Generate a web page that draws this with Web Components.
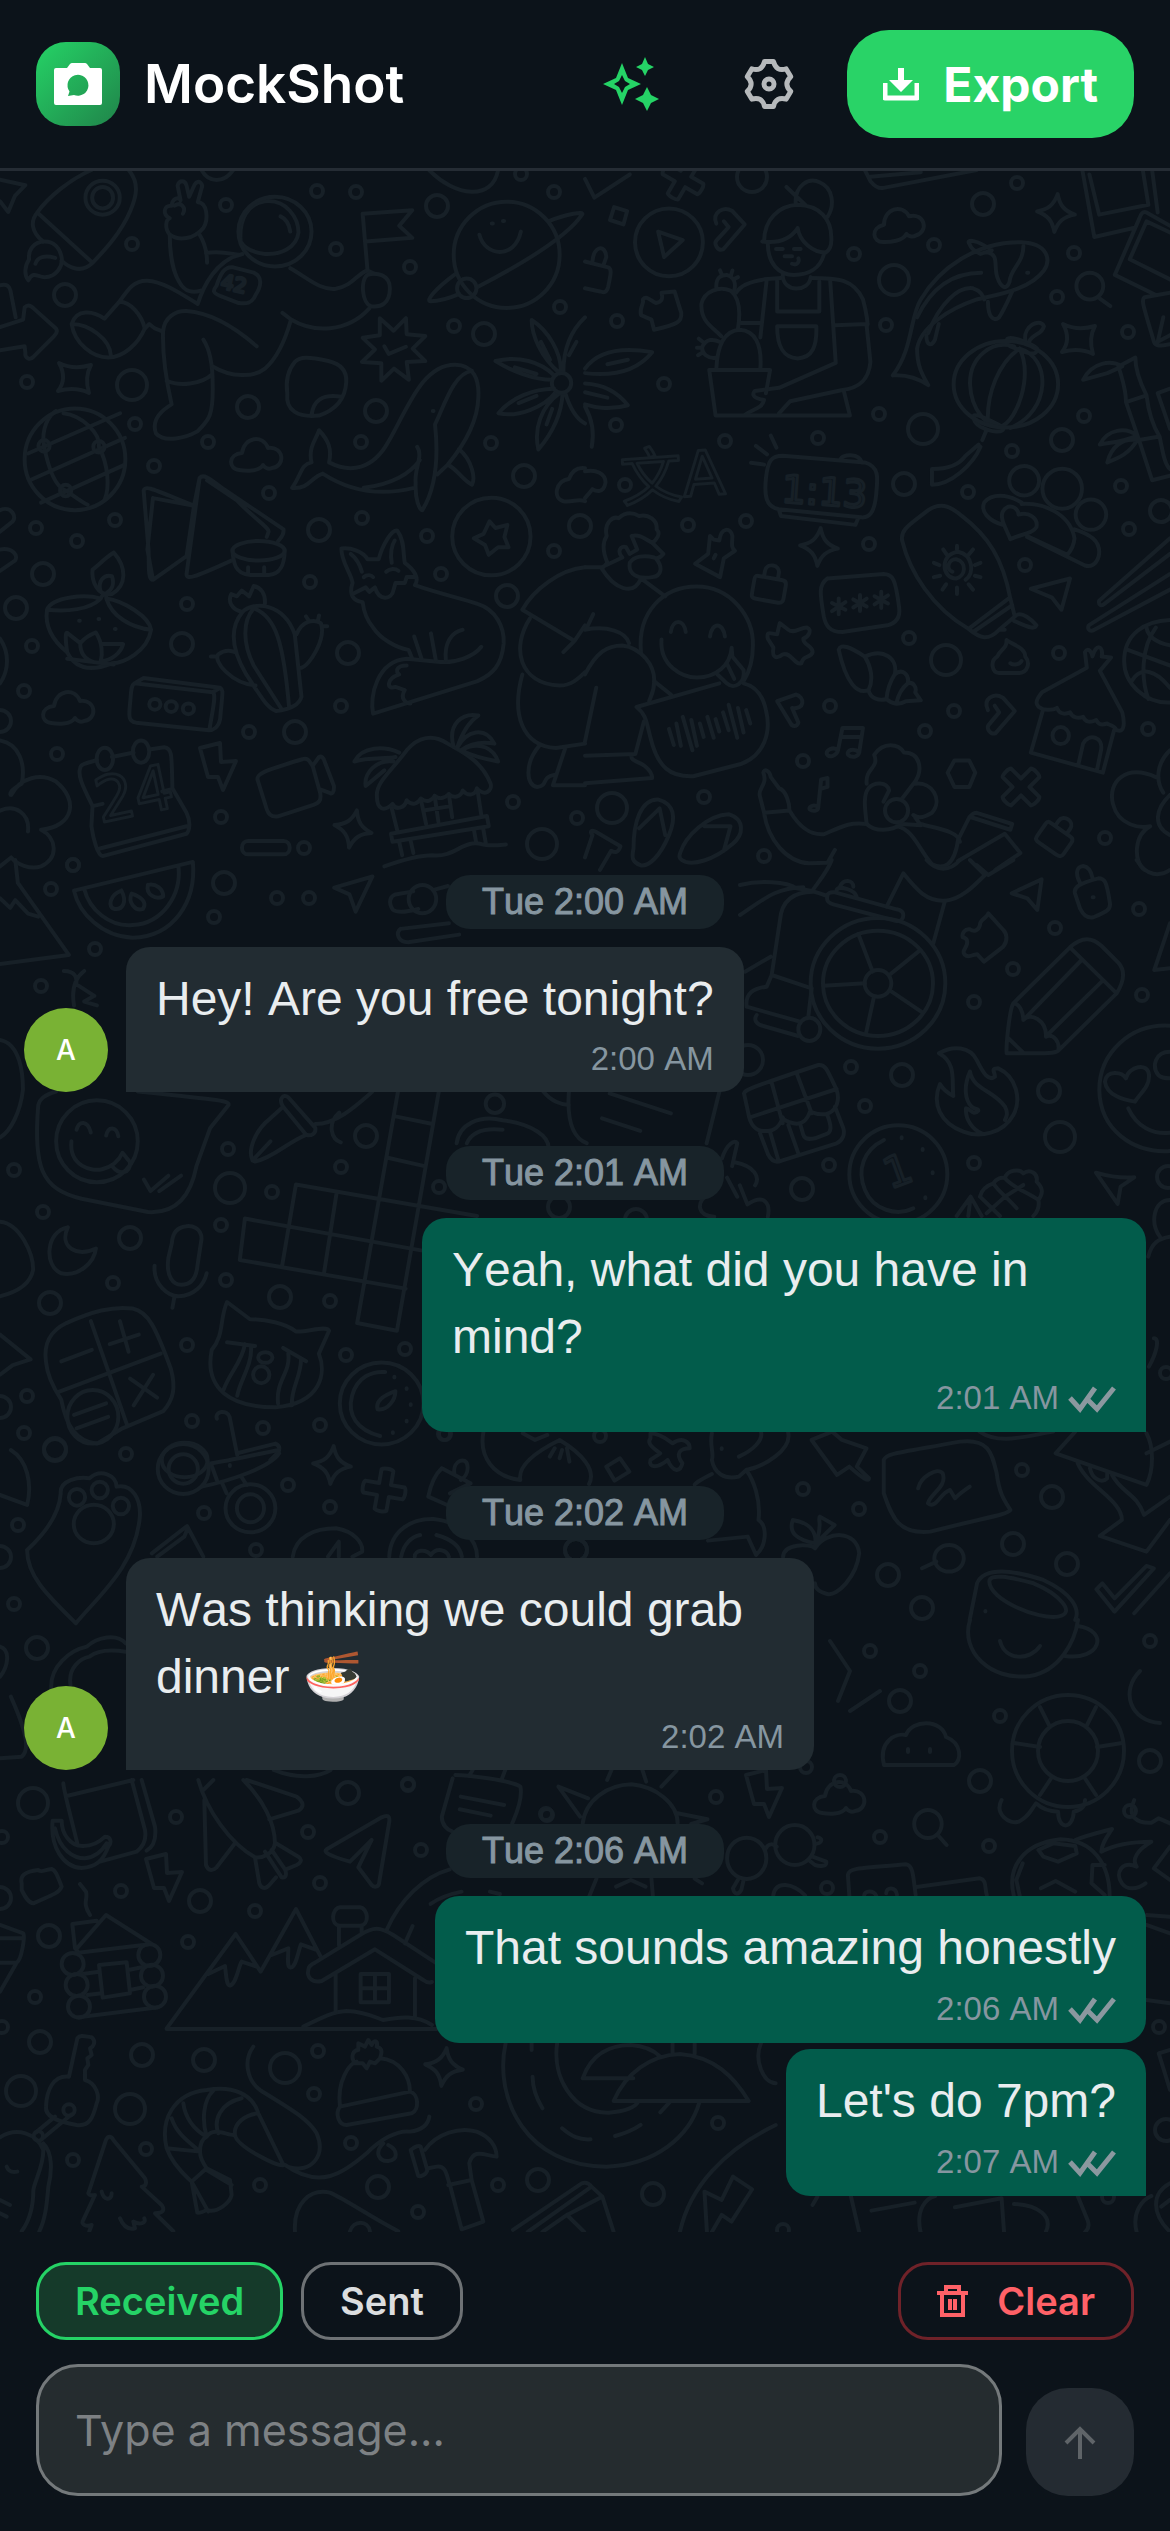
<!DOCTYPE html>
<html lang="en">
<head>
<meta charset="utf-8">
<meta name="viewport" content="width=device-width, initial-scale=1">
<title>MockShot</title>
<style>
  body {
    margin: 0;
    background-color: #0c131a;
    font-family: Inter, "Open Sans", sans-serif;
  }
</style>
</head>
<body>
<mock-app></mock-app>

<script>
// small shapes repeated over the wallpaper, drawn around 0,0
const STAMPS = {
  sparkle: "M0-19C3-8 8-3 19 0C8 3 3 8 0 19C-3 8-8 3-19 0C-8-3-3-8 0-19Z",
  pinch: "M-16-15C-6-10 6-10 16-13C11-4 11 5 14 15C4 10-6 10-17 13C-10 4-11-6-16-15Z",
  bolt: "M-18-20L2-25L3-6L18-7L5 22L0 9L-10 9Z",
  cloud: "M-16 16C-27 15-27 0-13-1C-11-17 8-20 13-6C29-8 31 12 17 14C13 16 9 13 8 11C4 18-10 17-16 16Z",
  cross: "M-6-20C-4-22 4-22 6-20V-6H20C22-4 22 4 20 6H6V20C4 22-4 22-6 20V6H-20C-22 4-22-4-20-6H-6Z",
  lock: "M-11-5H12C16-5 16-2 16 0V13C16 17 14 18 10 18H-11C-16 18-16 16-16 12V-1C-16-5-15-5-11-5ZM-7-5V-11C-7-20 7-20 7-11V-5"
};

// the wallpaper is built from tiles: origin, scale, then its drawings
const TILES = [
  {
    at: [0, -1], scale: [0.3731, 0.4464],
    paths: [
      "M0 22L68 34L40 58L22 94L0 70",
      "M100 95C130 60 190 20 245 0M345 0C375 30 365 60 350 90C325 140 280 180 248 208C215 235 180 215 165 203M100 95L248 208M100 95C80 115 85 140 115 160",
      "M120 160C90 160 75 180 78 200C66 215 64 235 76 247C90 225 100 240 120 240C150 240 170 215 165 195M120 160C145 160 160 175 165 195M95 210C100 195 120 190 148 197",
      "M455 108C435 100 438 78 460 80C462 62 480 60 484 68L476 35C480 22 496 22 500 35L507 60L522 32C532 20 546 30 540 42L530 72C555 72 560 110 545 130C520 155 480 160 455 145C440 130 445 110 455 108M468 80C485 70 500 85 490 98",
      "M455 145C455 190 465 230 480 250C495 275 520 275 538 270M535 145C550 165 555 185 555 208M552 186C590 180 620 188 640 190",
      "M645 160C640 110 665 75 710 70C770 65 800 110 800 140C795 175 750 190 710 188C680 185 655 175 645 160M752 104C768 110 775 122 778 138",
      "M580 260C590 235 600 215 625 218L680 230C705 240 700 260 685 280C675 300 660 300 640 298L590 282C570 275 570 270 580 260",
      "M320 295C345 265 360 247 395 248C440 250 490 280 530 300C545 260 580 200 650 188M320 295L280 333C250 315 205 310 192 345C200 390 250 420 290 420C330 420 370 390 388 355C380 325 350 295 320 295M192 345C240 345 295 380 297 415",
      "M388 355L400 345L415 355L437 362C440 330 470 315 500 316C570 320 640 360 688 395M437 362C435 420 445 470 460 525C430 540 405 560 418 590C440 612 500 600 530 585C560 560 572 550 570 480C570 440 565 405 545 380M447 472C480 485 540 480 568 458",
      "M570 440C620 465 680 465 710 445C745 420 765 380 780 335L757 320M780 335C840 365 930 365 990 310M778 220C830 245 860 270 900 266C945 260 960 230 985 225L1005 233",
      "M985 225L972 98L1105 90L1070 125L1105 152L980 160M985 235C1010 228 1045 235 1045 265C1045 300 1020 308 995 305C970 300 965 245 985 235",
      "M1470 115C1520 98 1568 92 1560 100C1520 150 1400 210 1280 262M1222 232C1160 270 1140 295 1155 294C1180 294 1210 285 1230 278M1285 145C1300 195 1380 200 1396 138M1318 120h3M1348 114h3",
      "M1055 360L1088 332L1090 368L1140 372L1106 400L1140 428L1090 430L1096 470L1056 445L1022 472L1022 433L970 430L1005 402L972 376L1018 370L1018 332ZM1030 395L1042 412L1088 396",
      "M1500 455C1450 420 1425 370 1425 336C1470 360 1505 410 1503 452M1450 385L1474 425M1510 452C1510 400 1530 360 1568 330M1525 415L1545 385M1480 470C1430 470 1370 450 1328 428C1390 415 1450 430 1485 460M1380 442L1438 457M1485 490C1430 490 1370 510 1336 545C1390 555 1460 530 1490 497M1390 522L1438 506M1500 500C1450 530 1430 580 1443 626C1480 590 1505 550 1508 500M1465 570L1480 535M1515 500C1530 540 1550 560 1568 568",
      "M0 352L62 335L66 308C75 300 85 305 90 310L150 355C156 362 150 368 145 372L90 418C80 428 66 420 68 410L66 395L0 404M0 258C20 255 25 260 28 270L42 330",
      "M770 500C765 470 775 445 790 430C805 418 825 418 880 428C915 435 930 450 928 475C925 520 890 540 855 550C800 555 765 540 770 500M835 548C840 520 860 500 915 508",
      "M783 712C810 680 805 660 835 655C825 620 850 600 855 583C880 605 890 625 882 655C940 680 1000 670 1040 610C1090 540 1130 435 1220 436C1270 436 1285 470 1282 510C1280 570 1240 620 1200 660L1172 682M783 712C830 715 830 690 865 680C920 710 1000 735 1110 712M975 712C1050 705 1100 680 1125 650M1118 620C1135 640 1110 670 1114 700C1112 740 1125 762 1132 762C1170 710 1175 640 1166 570C1190 530 1215 455 1265 450M1230 625C1265 650 1275 690 1265 705C1240 695 1225 670 1200 660M1160 540h2",
      "M118 618C110 580 130 550 150 540M75 635L322 545M118 618C130 670 150 710 176 718C195 728 215 742 235 750M80 695L335 600M110 745L335 660M170 545C220 550 270 590 265 620C290 660 295 710 280 740",
      "M385 718C390 705 410 715 520 752L500 865L410 918C395 918 400 880 398 850ZM410 735L520 752M410 735L395 850L410 918M520 752L535 690C545 680 560 690 600 715L760 805C762 820 750 825 745 832M535 690L500 905C500 918 515 915 620 875M555 695L635 740C680 780 720 800 720 810L715 822",
      "M623 850C625 880 630 905 670 907L720 907C755 905 763 880 763 850M665 890v14M708 890v14",
      "M126 985C140 955 230 950 270 960C275 950 285 945 285 960C330 965 400 1000 405 1030C395 1080 330 1105 300 1105C240 1125 200 1115 180 1080C135 1050 120 1020 126 985M126 985C180 990 240 985 270 960M285 960C300 1000 350 1025 405 1030M305 857C340 890 340 930 300 950C260 955 245 920 248 895C265 885 280 870 305 857M270 945C260 920 280 905 300 910C308 930 300 940 285 948",
      "M180 1080C175 1050 175 1035 180 1037L215 1060C230 1045 245 1040 257 1036C275 1060 275 1085 270 1100C300 1100 325 1080 330 1062L275 1062M215 1060C215 1080 225 1095 250 1102M180 1095L305 1108M212 1010h2M264 1006h2M308 1028h2",
      "M650 990C680 965 760 970 790 1040L808 1180C800 1205 760 1210 740 1212C715 1205 700 1180 660 1130C625 1080 610 1030 650 990M680 982C650 1010 650 1060 680 1110L755 1208M680 982C740 1000 760 1060 775 1205M650 990C620 985 610 965 620 950L635 955L648 942L668 955L680 932C700 935 712 950 710 972M795 1040C810 1010 840 1005 860 1015C875 1050 830 1110 808 1115M685 1155C620 1150 570 1100 585 1085C610 1070 625 1080 630 1080M565 1090h12M820 1000l8 10M855 998l-3 12M877 1022h-10",
      "M915 848C940 845 975 855 985 872L1015 872C1025 840 1050 805 1065 808C1085 830 1080 860 1085 880C1110 895 1125 915 1112 930C1180 950 1240 960 1280 972C1330 985 1352 1025 1350 1060C1345 1110 1320 1130 1280 1145L1000 1218C990 1180 1010 1100 1090 1095L1180 1102C1220 1105 1270 1090 1290 1068M915 848C915 880 940 900 945 925C935 950 945 965 972 968C975 990 985 1010 1000 1025C1020 1050 1060 1070 1095 1075L1105 1095",
      "M940 860C955 870 965 885 970 900M1050 880C1045 860 1050 840 1058 830M945 950L980 935L990 945L1005 935C1015 965 1050 965 1055 940L1060 925L1085 925L1090 912L1112 912M975 912C985 905 995 908 1000 912M1035 900C1045 892 1060 892 1068 898M1110 1045L1130 1095M1155 1038L1168 1098M1195 1098C1190 1060 1210 1035 1240 1030M1090 1110C1060 1110 1060 1125 1070 1130C1035 1140 1035 1165 1060 1158L1085 1165C1070 1185 1090 1195 1100 1195",
      "M1312 787L1328 802L1360 795L1352 822L1363 845L1335 845L1310 862L1300 840L1270 825L1296 815Z",
      "M360 1150L385 1138L590 1160C600 1165 596 1170 590 1230C585 1250 570 1255 560 1255L365 1238C345 1235 345 1225 348 1200C352 1170 350 1155 360 1150L570 1170C580 1175 572 1200 562 1250M590 1160L570 1170",
      "M215 1340C215 1332 225 1330 260 1322M300 1315L358 1305M400 1298L440 1293C462 1295 460 1310 462 1385L500 1440C512 1460 508 1480 500 1487L275 1537C262 1535 250 1500 245 1470L248 1425C235 1400 205 1360 215 1340M248 1425L275 1420M455 1388L435 1392M268 1520L500 1470",
      "M690 1365C690 1352 700 1348 810 1320C825 1315 830 1325 838 1335L858 1395C862 1412 855 1418 840 1422L745 1448C730 1450 720 1445 715 1432ZM838 1335L855 1315C862 1312 868 1318 870 1325L895 1380C896 1395 890 1398 885 1396L860 1388",
      "M1010 1400C1010 1435 1030 1438 1052 1420C1060 1435 1085 1430 1090 1412C1105 1425 1120 1420 1128 1408C1145 1420 1160 1410 1165 1402C1180 1412 1195 1405 1203 1398C1215 1408 1235 1405 1240 1390C1255 1405 1275 1400 1278 1385C1300 1405 1320 1390 1315 1375C1290 1320 1230 1300 1200 1285C1160 1262 1120 1270 1090 1300C1050 1345 1010 1370 1010 1400",
      "M1050 1430L1065 1480M1128 1410L1142 1465M1165 1402L1175 1460M1203 1398L1212 1450M1135 1435L1208 1425M1280 1390L1290 1445M1048 1487L1305 1447L1310 1470L1052 1505ZM1070 1505L1078 1535M1100 1500L1108 1530M1270 1477L1276 1505M1295 1475L1302 1508M1030 1560C1080 1545 1120 1535 1160 1535C1220 1540 1240 1500 1290 1510C1310 1515 1340 1512 1356 1511",
      "M950 1325C970 1290 1030 1290 1070 1305M950 1325C990 1315 1030 1320 1060 1315M1055 1325C1010 1320 975 1350 980 1380L1030 1345M1215 1290C1200 1240 1240 1215 1282 1222C1250 1240 1235 1270 1225 1295C1250 1255 1300 1245 1325 1285C1290 1280 1260 1285 1235 1300C1290 1275 1325 1300 1335 1325C1300 1320 1260 1310 1235 1300",
      "M665 1503H760C782 1503 782 1533 760 1533H665C643 1533 643 1503 665 1503",
      "M0 1278C50 1285 70 1330 58 1375C25 1390 25 1400 30 1400C55 1360 110 1350 150 1370C210 1410 200 1470 110 1478C150 1495 160 1540 110 1560C80 1568 45 1555 30 1540L0 1560M0 1435C40 1420 80 1440 75 1482",
      "M1568 890C1500 895 1430 940 1400 985L1540 1055L1568 1020M1540 1055L1510 1080M1420 1005C1370 1070 1390 1150 1500 1155C1530 1155 1550 1140 1568 1125M1400 1130C1370 1220 1400 1290 1490 1295L1568 1285M1445 1290C1405 1330 1410 1380 1440 1382C1470 1380 1450 1360 1485 1355M1515 1295L1482 1378H1568",
      "M0 762C30 750 50 780 30 790L0 810M0 850C35 845 50 865 40 875L0 898M540 0C560 30 600 30 625 0M1150 0C1220 60 1320 70 1335 0M1568 668C1540 665 1530 680 1525 692C1490 695 1480 735 1510 742C1535 745 1550 735 1568 742M0 1050C25 1080 25 1120 0 1150"
    ],
    ellipses: [[275, 62, 46, 38], [275, 62, 28, 24], [737, 138, 98, 78], [1358, 190, 142, 119], [1251, 265, 26, 22], [1505, 477, 26, 22], [201, 648, 135, 114], [118, 618, 15, 13], [265, 620, 15, 13], [176, 718, 15, 13], [693, 853, 70, 22], [1317, 821, 105, 87], [415, 1197, 15, 12], [459, 1202, 15, 12], [505, 1207, 15, 12], [281, 1319, 22, 25], [378, 1303, 22, 25]],
    small: [[850, 46], [953, 50], [607, 79], [354, 165], [900, 177], [1099, 218], [1485, 50], [1397, 10], [72, 476], [1500, 308], [1217, 350], [363, 569], [558, 610], [414, 662], [967, 610], [1315, 612], [96, 801], [308, 785], [206, 831], [721, 724], [970, 779], [1144, 821], [1485, 853], [1181, 905], [831, 924], [500, 972], [87, 1066], [64, 1167], [913, 1200], [667, 1260], [153, 1309], [592, 1450], [816, 1518], [195, 1556], [1375, 1415], [1547, 1451]],
    medium: [[1170, 80], [175, 281], [1298, 368], [665, 530], [1007, 540], [1405, 686], [854, 806], [115, 905], [43, 982], [487, 1062], [933, 1082], [1360, 954], [792, 1258], [0, 1235], [1555, 797]],
    large: [[354, 481], [1453, 1510]],
    stamps: [["pinch", 200, 467, 0], ["cloud", 683, 637, 0], ["cloud", 180, 1202, 0], ["bolt", 583, 1340, 0], ["sparkle", 945, 1477, 12]]
  },
  {
    at: [585, -1], scale: [0.3731, 0.4464],
    paths: [
      "M196 138L262 157L212 195ZM0 20L25 62L120 10M78 83L113 92L103 122L67 112ZM0 205L62 218C72 222 70 230 62 262C58 275 50 275 40 272L0 265M20 205C22 170 55 165 57 195L50 212",
      "M352 120C340 95 370 80 395 92L428 122L370 178C355 182 345 165 352 158L385 128L372 115",
      "M565 78C560 35 600 15 630 28C665 40 670 80 650 105M540 38L590 78M480 160C480 110 520 80 570 78C630 80 660 110 660 150C662 170 655 180 645 185C610 185 575 160 570 130C550 155 520 165 475 160M490 165C490 210 520 235 560 235C600 235 630 220 640 190M530 235C530 275 600 275 605 240M535 193H555M512 177h18M560 177h18M555 210C570 215 575 205 572 198",
      "M605 242C680 242 720 245 745 290C755 320 760 350 755 350L765 430C760 480 720 490 690 493L550 518L520 545M525 242L480 245C440 250 415 260 405 275M515 245V317H628V250M487 245L470 375M657 245L672 432L520 488L455 495C445 505 455 512 480 515C475 535 450 535 430 548M670 348L758 345M415 343H470",
      "M515 350H620C622 395 610 420 570 422C530 420 515 395 515 350M333 448H496L485 500M333 448L350 550H710L693 493M352 445C355 390 375 360 415 358C455 360 475 390 470 445M312 300C320 270 360 260 390 270C420 290 415 330 410 355M312 300C310 340 340 350 365 372M352 265C350 240 365 235 380 235C400 240 405 255 400 270M355 420C330 425 310 410 315 395C325 378 345 378 360 385M362 225l6 12M395 225l-4 12M410 240l-12 5M305 378l12 8M300 398h12M303 415l12-6",
      "M150 325C145 305 160 300 155 290C165 280 175 292 190 298C205 295 210 290 205 275L240 272L258 320C260 340 250 345 185 358L178 335Z",
      "M825 460C880 400 870 330 900 290C950 220 1050 160 1170 162C1240 165 1250 200 1230 225C1190 270 1100 280 1050 290C980 310 900 350 890 400C890 440 905 460 920 482C890 465 860 458 825 460M1080 185C1110 190 1095 215 1105 240C1115 265 1130 270 1138 250C1140 220 1175 210 1175 170M1030 165C1020 155 1050 155 1090 180L1060 188C1040 180 1035 175 1030 165",
      "M890 330C930 260 990 230 1062 230M920 365C950 300 1000 260 1040 265C1060 270 1065 280 1070 290M1080 295C1080 330 1095 340 1110 330C1125 310 1135 290 1145 272M915 370C915 395 930 395 938 380L948 345M1185 230h3M1380 288L1408 305",
      "M1333 0L1365 150L1470 130M1352 10L1378 100L1510 78L1495 0M1520 0L1535 95M1568 125L1505 95C1495 92 1490 97 1485 110L1420 235L1530 280M1568 140L1505 115L1460 200L1568 245M1568 275L1500 285C1490 290 1495 300 1525 385C1530 395 1540 395 1568 390M1550 330L1535 385L1568 370",
      "M1150 395C1090 380 1030 420 1032 480C1035 540 1080 575 1110 575M1165 400C1110 430 1075 500 1080 570M1165 400C1200 460 1160 560 1115 575M1165 400C1250 420 1250 540 1140 578M1132 378C1140 370 1200 390 1212 400C1212 415 1195 412 1180 408L1140 395C1130 390 1130 385 1132 378M1042 550C1050 545 1110 570 1122 578C1120 590 1090 588 1060 575C1045 568 1040 560 1042 550M1180 380C1175 350 1220 330 1230 350C1225 370 1200 365 1190 385M1075 585L1065 605M1055 615L1020 640C1000 665 965 670 930 670V705C980 705 1040 660 1060 620",
      "M1430 440L1475 420C1475 450 1490 480 1505 505L1450 520C1450 490 1440 470 1430 440M1335 470C1360 430 1410 425 1440 440L1400 455ZM1450 520L1485 605L1540 597C1520 570 1510 540 1505 505M1485 605L1520 695L1568 685M1540 597C1550 640 1555 660 1568 670M1380 615C1400 580 1450 575 1480 595C1440 610 1410 610 1380 615M1400 655C1410 620 1440 600 1480 605C1460 635 1430 645 1400 655M1568 490L1535 500L1568 580",
      "M485 690C490 650 500 640 530 640L750 655C790 665 785 690 780 730C775 770 760 780 740 778L520 760C485 755 480 730 485 690M520 762L525 775L725 795L732 780M685 648C690 635 735 635 742 655M498 595L513 622M458 618L488 637M445 656L480 660",
      "M0 445C30 410 90 395 180 408C130 460 50 460 0 455M60 435L115 425M0 478C50 480 90 500 115 527C60 540 20 530 0 525M0 498L60 510M0 530C20 560 25 590 18 620M0 675C30 670 55 680 55 700C50 725 30 720 20 715L0 735",
      "M60 880C45 850 50 830 58 820C50 790 75 775 90 780C110 765 130 768 145 775C170 770 195 785 192 805C205 815 190 830 180 835L210 860C200 870 195 870 190 870C210 890 205 910 180 912C140 918 115 905 120 880C130 865 160 862 185 868M100 868C85 855 95 840 110 845L120 860L140 850L125 820C150 815 165 830 180 835M60 880L45 893C80 940 130 955 150 915L215 955M0 890H45L100 868",
      "M335 820L345 828L360 830C365 800 390 800 395 820C395 835 390 845 402 853L372 870L362 912L295 882L330 860ZM345 870L350 862",
      "M150 1080C140 990 210 933 299 933C390 933 452 1000 450 1065C450 1100 440 1125 425 1145M230 1035C235 1005 265 1005 270 1035M335 1045C340 1012 370 1012 375 1045M205 1052C200 1110 260 1137 300 1137C350 1137 390 1110 393 1070L395 1090L425 1120C430 1150 400 1165 380 1150L355 1130M380 1105L400 1140",
      "M138 1203L360 1150M138 1203C165 1220 165 1240 175 1270C195 1340 230 1360 290 1358L420 1330C480 1310 500 1260 485 1210C475 1170 450 1155 425 1150M225 1252L238 1288M245 1240L257 1290M262 1225L288 1300M285 1232L300 1290M308 1240L318 1270M328 1225L345 1272M350 1230L360 1258M370 1215L385 1255M385 1198L408 1272M410 1205L425 1260M432 1210L443 1240M185 1145L230 1175",
      "M0 1130C30 1080 60 1065 100 1065C150 1070 190 1110 185 1150C185 1170 175 1180 172 1190M0 1030C60 1020 110 1035 118 1060M5 1025L22 995M158 1235L135 1308L0 1312M125 1310C120 1325 145 1325 160 1335C175 1345 180 1355 180 1362L0 1374M30 1160L0 1280",
      "M650 915L800 905C825 905 832 915 842 980C845 1000 835 1015 810 1020L690 1035C655 1035 645 1020 640 1000C630 950 625 930 650 915M680 960V995M662 970L698 985M698 968L662 988M737 952V988M719 962L755 978M755 960L719 980M794 945V981M776 955L812 971M812 953L776 973",
      "M490 1050C485 1030 500 1040 515 1040L522 1015L545 1030C560 1040 575 1025 595 1025C610 1030 600 1045 585 1050C585 1065 610 1065 610 1080C605 1095 585 1085 580 1105C560 1110 555 1080 530 1085C515 1095 500 1095 505 1070Z",
      "M850 830C845 805 870 795 920 762C950 745 975 750 1010 775C1080 820 1120 870 1140 960L1152 1000L1110 1030C1080 1055 1060 1050 1028 1028C930 980 870 900 850 830M1028 1028L1135 960M1040 1035L1145 975M1152 1000C1170 985 1200 1010 1210 1020C1205 1030 1190 1025 1150 1010M1110 1030L1125 1030",
      "M985 900C965 895 975 870 995 872C1025 878 1020 910 995 915C955 915 950 860 1000 855C1040 862 1045 905 1020 918M997 842V850M960 850L970 862M1040 850L1028 862M935 880L950 885M1060 880L1045 885M935 912L952 909M1060 912L1045 909M958 940L968 928M1040 940L1028 928M997 950V935",
      "M1120 795C1080 785 1060 765 1070 745C1090 725 1130 725 1170 745M1170 748C1230 745 1300 770 1312 825C1310 845 1300 855 1293 862L1185 820M1312 805C1350 815 1385 830 1377 865C1370 885 1355 890 1340 886L1185 822M1120 765C1135 745 1160 755 1162 772C1190 765 1215 780 1210 800C1200 815 1170 815 1140 827C1130 805 1110 780 1120 765",
      "M1195 938L1300 915L1277 985L1252 958ZM680 1075C685 1060 710 1068 750 1090C800 1070 840 1095 830 1130C850 1115 870 1130 865 1150C880 1145 890 1160 885 1170L900 1188L860 1190C840 1200 820 1195 808 1185C790 1190 765 1185 760 1165C730 1175 700 1150 680 1075M750 1090C765 1110 775 1140 760 1165M830 1130C815 1150 810 1165 808 1185M865 1150C850 1160 840 1175 835 1193",
      "M1130 1053C1150 1065 1180 1070 1180 1090C1195 1105 1185 1125 1165 1127H1110C1090 1125 1085 1100 1105 1090C1115 1070 1130 1075 1130 1053M1140 1105C1150 1110 1165 1108 1170 1100M1568 825L1378 965C1375 975 1385 978 1392 972L1568 860M1568 905L1350 1020C1345 1030 1355 1035 1365 1030L1568 940",
      "M1568 1008C1500 1010 1445 1040 1445 1100C1445 1150 1500 1195 1568 1193M1455 1075L1568 1110M1505 1025C1510 1050 1540 1060 1568 1065M1530 1025C1490 1070 1490 1140 1510 1185M1465 1145C1490 1110 1530 1120 1568 1160",
      "M1228 1208C1205 1200 1205 1190 1225 1170L1345 1115L1340 1080C1350 1065 1360 1085 1360 1090C1370 1060 1390 1065 1385 1090L1410 1092L1380 1122L1440 1215C1450 1250 1440 1260 1425 1255C1415 1240 1405 1245 1400 1240C1380 1245 1375 1240 1370 1232C1350 1240 1340 1235 1335 1225C1320 1230 1305 1225 1300 1215C1280 1222 1270 1215 1265 1205C1250 1212 1235 1208 1228 1208L1195 1305L1388 1350L1418 1255M1322 1333L1335 1285C1350 1260 1390 1270 1383 1300L1372 1345",
      "M515 1190L565 1175C590 1180 590 1210 555 1205L572 1238C568 1248 555 1248 550 1238ZM1080 1210C1065 1185 1095 1170 1120 1182L1152 1212L1100 1262C1085 1265 1075 1250 1082 1243L1110 1215L1098 1200",
      "M678 1300L690 1250H745L735 1305M685 1270H740M678 1300C665 1290 645 1300 648 1308C655 1318 675 1312 678 1300M735 1305C720 1293 700 1300 705 1310C715 1318 732 1315 735 1305M625 1428L633 1365L650 1362V1382L632 1386M625 1428C615 1420 600 1425 602 1432C610 1438 625 1436 625 1428M972 1350L990 1323H1030L1046 1350L1030 1382H990Z",
      "M480 1440L468 1400C465 1385 490 1375 478 1350C480 1340 495 1345 498 1360L520 1385C540 1390 548 1420 548 1435L480 1440C490 1500 540 1550 600 1553L650 1552L670 1523M548 1435C580 1480 610 1490 640 1488C690 1470 710 1460 755 1465M835 1470C880 1475 900 1530 930 1555C960 1568 990 1560 1000 1500L1030 1450C1040 1440 1045 1440 1050 1440L1145 1465L1140 1478L1035 1450M900 1465C940 1475 1000 1480 1005 1505M1000 1548L1125 1487L1167 1530L1100 1568",
      "M755 1375C750 1340 790 1340 775 1310C800 1280 840 1285 855 1305C900 1305 905 1345 885 1370L848 1410M755 1465C750 1430 745 1400 760 1385C775 1370 810 1370 815 1390L800 1415M885 1375C930 1370 960 1410 930 1440C900 1455 890 1450 880 1445M755 1465C780 1485 820 1480 850 1465L900 1468L885 1450",
      "M130 1520C130 1460 150 1410 195 1410C240 1420 245 1450 225 1490C200 1540 170 1560 150 1558C125 1550 125 1540 130 1520M145 1475L200 1430L215 1490M255 1530C270 1490 330 1445 385 1443C430 1455 425 1490 395 1510C340 1550 290 1555 270 1550C255 1545 250 1540 255 1530M320 1470H390L372 1525",
      "M0 1540L20 1490C10 1480 20 1478 30 1483L95 1515C90 1530 80 1530 70 1525L40 1568M1530 1360C1450 1330 1400 1370 1415 1420C1430 1470 1490 1475 1515 1470C1470 1490 1470 1550 1500 1568M1568 1300C1530 1330 1530 1370 1550 1395M1568 1400C1530 1430 1520 1470 1568 1490M750 0L765 25C780 40 790 42 800 40L1050 0M765 15L900 5"
    ],
    ellipses: [[225, 162, 91, 76], [1353, 260, 36, 30], [1128, 480, 140, 97], [1177, 696, 40, 33], [1279, 714, 53, 45], [1356, 772, 41, 34], [1275, 1267, 22, 19], [835, 1435, 31, 26]],
    small: [[721, 189], [936, 169], [1157, 30], [808, 348], [87, 338], [1266, 285], [1310, 187], [1455, 362], [213, 479], [84, 572], [374, 606], [625, 600], [789, 547], [1337, 551], [108, 705], [275, 795], [432, 787], [761, 838], [1144, 629], [1026, 721], [1436, 708], [1457, 804], [1180, 885], [869, 1049], [657, 1200], [990, 1213], [912, 1256], [584, 1325], [320, 1405], [479, 1536], [1271, 1082], [1509, 1252], [1393, 1497]],
    medium: [[1067, 77], [855, 703], [1278, 604], [1545, 763]],
    large: [[828, 247], [905, 580], [967, 1098], [447, 15], [73, 1430]],
    stamps: [["cross", 263, 20, 30], ["cloud", 835, 122, -8], ["sparkle", 1262, 97, 5], ["pinch", 1323, 378, 0], ["lock", 495, 925, 10], ["sparkle", 628, 845, 5], ["cross", 1168, 1382, 45], ["lock", 1268, 1488, 35]]
  },
  {
    at: [0, 689], scale: [0.5102, 0.3827],
    paths: [
      "M145 80L378 5C385 110 340 200 260 203C200 200 155 140 145 80M165 75C175 130 215 175 260 170C320 165 355 90 350 20M238 80C215 90 210 125 225 128C240 130 250 110 238 80M258 88C250 110 265 135 280 128C290 110 275 95 258 88M290 65C285 90 305 105 320 95C320 75 305 60 290 65",
      "M655 72L730 43L697 135L685 90ZM30 0L35 60L135 248L0 272M0 100L20 125L30 105L55 140L75 148",
      "M75 640C65 800 80 860 160 885L290 920C350 925 375 870 385 800L412 700L448 640C450 630 440 628 270 605M110 605C85 615 78 625 75 640M150 705C155 680 172 680 178 712M208 720C212 695 228 695 232 722M140 735C135 800 180 815 200 808C225 800 235 780 240 765L255 790C255 820 235 825 220 800M282 835L295 865L330 825M312 865L355 825",
      "M495 785C485 760 500 705 530 675L555 645L600 718C560 740 540 775 500 788ZM495 785L530 735M555 645C545 625 555 610 565 620L618 700C620 715 610 722 600 718M618 690C660 690 700 640 730 605M665 660C640 690 650 730 668 738",
      "M780 605L700 1210L778 1230L860 605M775 670L848 690M760 778L832 800M580 848L935 930M480 937L825 1020M580 848L553 1060M480 937L470 1045L795 1120M660 868L635 1080",
      "M133 960C90 970 85 1060 120 1080C155 1090 185 1050 188 1015C150 1040 115 1010 133 960M330 1040C325 1090 340 1110 355 1110C375 1110 385 1090 387 1060L395 990C395 960 375 955 365 957C345 960 338 980 337 1000ZM303 1060C300 1110 330 1140 350 1140C380 1140 400 1110 405 1080M342 1140L338 1170",
      "M90 1310C85 1260 100 1230 130 1210C180 1180 220 1165 260 1172C290 1180 305 1220 335 1330C345 1380 340 1410 320 1440L240 1485L190 1525C150 1520 130 1480 120 1410C100 1370 92 1340 90 1310M178 1205L250 1480M115 1390L315 1290M120 1310L180 1280M215 1265L272 1240M235 1205L252 1285M255 1355L308 1405M300 1345L262 1425M145 1450L208 1420M150 1485L212 1455",
      "M445 1155C430 1200 440 1240 415 1280C400 1380 450 1430 540 1430C630 1420 640 1340 625 1290L645 1230C640 1215 600 1235 580 1232C560 1210 520 1200 490 1200ZM445 1260L500 1270M480 1265C475 1310 450 1340 438 1385M492 1270C495 1320 470 1360 465 1400M555 1275L600 1310M565 1290C570 1340 540 1360 545 1420M590 1305C590 1350 570 1380 572 1425",
      "M745 1505C700 1490 680 1450 690 1400C700 1350 730 1335 755 1338M740 1435C735 1410 760 1395 775 1388C775 1410 760 1440 740 1435M773 1350v2M797 1380v2M805 1422v2M797 1465v2M770 1495v2",
      "M425 1460C420 1440 445 1435 450 1455L465 1555M465 1550L540 1525C555 1535 545 1550 530 1568M0 1240L60 1305L25 1320L0 1345M0 945C40 950 65 1030 65 1070C60 1110 30 1130 0 1140M0 470C40 480 45 560 45 600C40 660 20 710 0 725",
      "M770 130C760 110 765 95 775 90L810 82M850 78L878 68M770 130C780 140 800 135 820 128M785 180C775 190 780 215 800 215L900 195M785 180L880 165",
      "M895 740C900 690 940 665 985 680C1040 690 1080 720 1075 760M915 740C925 710 950 700 985 705M1065 605C1080 630 1100 640 1115 640M1115 605C1110 700 1130 730 1150 740M1195 610L1315 662M1180 675L1255 708M1410 605L1385 740",
      "M1415 780C1425 740 1440 730 1445 740L1435 800M1390 870C1360 900 1370 930 1400 932M1440 790C1480 800 1490 830 1480 850M1425 830L1445 880M1450 850L1465 900C1500 870 1510 900 1505 932M165 290C145 310 140 340 145 380M125 290C150 290 150 310 150 325L185 355L165 370L190 380"
    ],
    ellipses: [[190, 735, 80, 107], [182, 1455, 50, 70], [520, 1300, 14, 14], [512, 1345, 16, 22], [748, 1420, 82, 107], [828, 102, 27, 37], [970, 637, 18, 24], [362, 1568, 45, 45]],
    small: [[143, 12], [100, 75], [543, 100], [605, 100], [420, 150], [187, 232], [80, 328], [447, 755], [27, 810], [533, 868], [668, 803], [85, 920], [433, 955], [861, 855], [443, 1097], [222, 1105], [646, 1152], [367, 1267], [678, 1294], [793, 1277], [53, 1400], [376, 1467], [516, 1483], [628, 1477], [48, 1498], [870, 1500]],
    medium: [[439, 60], [718, 720], [255, 987], [98, 1157], [548, 1143], [107, 1540], [0, 1430]],
    large: [[451, 856]],
    stamps: []
  },
  {
    at: [740, 689], scale: [0.3333, 0.3333],
    paths: [
      "M398 335L355 222M448 345L535 275M455 395L548 458M402 410L378 520M375 370L250 377",
      "M262 108C258 125 268 130 280 133L470 183C485 185 490 175 490 165C490 155 480 150 470 148L285 97C270 95 262 100 262 108M290 90C295 75 345 90 350 110M300 80C310 55 340 60 340 80M220 88C240 60 265 30 275 0M0 75C60 60 140 65 170 85C210 90 240 100 262 108M0 165C70 120 100 85 190 82M120 180C125 120 160 95 220 95M120 180L95 345L80 380C40 385 15 400 20 440M95 345L215 385M20 440L180 485M50 465C40 480 50 490 60 495L175 528M215 385L205 470M15 335L92 290",
      "M440 140L490 40C530 90 560 125 615 122C660 120 700 80 735 45L690 0M615 122L580 250M560 0C590 35 630 35 660 0M710 15L745 45L820 0M1190 0C1220 50 1260 50 1290 30",
      "M815 100L905 58L892 150L862 115ZM1005 100C1000 80 1020 70 1075 55C1095 55 1100 65 1110 130C1112 150 1100 155 1060 172C1040 175 1030 165 1020 145ZM1020 68C1005 40 1010 20 1030 18C1050 20 1055 40 1058 55M1058 112h3",
      "M745 160C740 175 718 180 720 195C715 215 700 215 690 208C675 205 665 220 668 232C685 235 685 250 675 265C665 280 675 295 700 285L712 283L732 305L790 260C805 240 800 220 790 210Z",
      "M820 430L990 262C1030 225 1060 235 1085 258L1135 308C1155 330 1155 360 1130 400L955 572C945 580 940 580 800 580C798 560 808 450 820 430M990 262L1130 400M1025 300L860 470M1085 365L922 525M820 430C840 430 850 460 850 480C870 455 920 480 918 530C940 520 960 545 955 572M805 535L850 578M1290 190L1243 330L1290 325",
      "M1290 497C1170 490 1078 580 1078 690C1080 810 1180 880 1290 873M1165 745C1190 800 1240 825 1290 818M1158 655C1165 620 1225 605 1227 645C1230 680 1200 700 1185 725C1150 720 1100 705 1095 665C1100 630 1145 635 1158 655M1290 575C1245 575 1235 620 1255 645C1265 655 1280 655 1290 655",
      "M597 580C640 555 690 560 710 600C730 640 745 665 765 650C765 635 750 625 775 625C830 650 845 720 820 765C790 820 720 835 670 815C600 790 575 730 600 672C610 690 625 700 640 708C635 660 650 610 597 580M690 635C700 690 760 690 795 740C805 760 800 770 795 780M690 635C670 680 675 720 695 740C705 750 715 745 715 752C700 770 690 745 678 745C675 780 700 810 725 820",
      "M12 700C15 690 25 685 235 615C255 612 260 625 290 690C300 720 290 750 265 760C240 770 215 755 210 755C200 785 180 795 160 790C140 785 130 780 128 772C120 800 100 815 75 813C45 815 30 790 25 760ZM95 668L128 790M172 645L215 760M30 772L290 687M60 820L85 885C95 905 110 908 125 902L290 850C310 840 315 820 310 805L285 740M90 815L115 900M145 795L175 880M180 790L190 825C195 840 210 838 225 835L260 822C275 815 275 800 262 765",
      "M432 840C370 870 350 930 375 990C400 1050 470 1070 520 1045M485 832v3M548 867v3M578 937v3M556 1012v3",
      "M720 1010C725 985 745 975 760 970C770 955 785 950 795 955C800 930 840 925 850 940C870 925 895 940 890 965C910 985 910 1000 895 1020C900 1040 890 1060 880 1068M760 970C775 995 800 1010 830 1045M795 955C820 985 870 1000 895 1020M795 1010L740 1060M850 975L795 1010M720 1010L780 1068M650 1068L692 1010L725 1068M692 1010L685 1068",
      "M1068 938C1110 950 1150 955 1183 952L1142 980L1133 1032ZM1290 1020C1240 1020 1230 1090 1260 1130M1225 1190C1235 1150 1255 1135 1290 1130"
    ],
    ellipses: [[414, 370, 202, 196], [414, 370, 165, 158], [414, 370, 40, 40], [208, 508, 33, 35], [475, 943, 147, 147]],
    small: [[1198, 147], [945, 204], [818, 328], [703, 427], [1207, 405], [333, 622], [374, 738], [268, 915], [703, 909]],
    medium: [[487, 645], [928, 692], [185, 987], [1285, 950]],
    large: [[25, 600], [959, 832]],
    stamps: []
  },
  {
    at: [400, 949], scale: [0.4911, 0.3333],
    paths: [
      "M170 935C160 1010 190 1070 245 1080C240 1040 270 1000 325 960C370 1000 400 1050 385 1092M305 1010L315 985M325 1015L330 990M345 1025L340 985M250 940L275 960L300 945M420 1040L448 1015L467 1055L437 1082Z",
      "M510 940C530 940 545 960 555 970C575 950 590 965 590 985C570 985 560 1000 575 1030C570 1060 555 1055 545 1020C525 1045 505 1045 510 1020L530 1000C505 975 505 965 510 955Z",
      "M635 940C630 980 640 1000 635 1020C640 1060 660 1080 690 1070L705 1050C720 1080 735 1140 730 1200C750 1220 745 1280 725 1305L708 1250L627 1262M635 1062C610 1080 600 1092 600 1094M690 1010C720 990 740 960 735 935M705 1050C740 1040 800 990 790 935M655 985v2",
      "M838 960L880 935L900 960L950 985L930 1040L955 1075C955 1085 945 1080 915 1040L890 1065Z",
      "M985 1020C990 1000 1010 1000 1140 965C1200 955 1205 1000 1215 1060C1220 1120 1230 1140 1243 1170C1235 1185 1200 1190 1080 1235C1010 1245 1000 1180 985 1120ZM1055 1105C1060 1070 1095 1040 1105 1060C1115 1100 1080 1120 1075 1150C1090 1170 1100 1120 1120 1110L1130 1135C1140 1120 1150 1110 1160 1100",
      "M1375 935L1335 1000L1520 1095C1535 1050 1535 980 1520 940M1380 1030C1400 1100 1470 1140 1470 1200L1425 1248L1520 1295L1568 1200M1405 1045C1410 1080 1430 1090 1440 1075V1060M1450 1065C1470 1120 1500 1120 1515 1185L1568 1130M1520 1000L1568 965M1535 655C1548 655 1540 700 1525 740M1180 935C1220 975 1270 950 1330 935",
      "M845 1285C870 1230 930 1230 935 1300C930 1370 890 1430 870 1422C850 1415 845 1400 845 1390M845 1285C835 1270 780 1270 780 1312M845 1285C850 1240 840 1210 800 1200C790 1240 810 1260 845 1270M850 1255C860 1210 850 1195 855 1190L885 1215L850 1265",
      "M1160 1500L1175 1390C1190 1340 1250 1350 1310 1380C1370 1420 1385 1470 1375 1500M1200 1385C1200 1440 1300 1500 1340 1490C1380 1480 1340 1420 1290 1390C1240 1370 1200 1360 1200 1385M1192 1473v2",
      "M1418 1408L1430 1390L1455 1435L1520 1338L1535 1345L1455 1475ZM1495 1480L1568 1360M1092 1325L1063 1345"
    ],
    ellipses: [[1118, 1315, 30, 40]],
    small: [[820, 1108], [934, 1168], [1267, 1050], [408, 948], [91, 942], [1560, 760]],
    medium: [[323, 262], [993, 1365], [1248, 1273], [1358, 1332], [1327, 1130], [358, 1290], [1063, 1465], [480, 300]],
    large: [],
    stamps: []
  },
  {
    at: [0, 1279], scale: [0.5421, 0.3333],
    paths: [
      "M50 300C90 240 110 180 112 130C110 90 145 80 165 85C185 55 215 75 215 110C245 100 260 150 258 200C250 350 180 440 140 520C90 440 50 380 50 300M0 135L50 165C60 100 50 30 20 0",
      "M390 40C430 30 480 10 515 0M372 110C430 90 500 50 515 10M390 45L400 90M424 45v3M410 100L418 130M445 80L455 105",
      "M815 55L868 100M815 55C805 70 795 100 790 140L825 165M868 100L830 130M838 70C835 30 860 20 862 45C865 70 855 85 850 90M280 310L345 228L375 320M290 320L340 260L345 240",
      "M540 320C545 260 580 235 620 235C655 245 670 280 668 305L650 320M605 320L625 275L625 320M718 320C720 240 760 205 800 207C850 215 880 270 880 320M740 320C745 280 760 260 775 255M805 255C840 270 850 300 852 320M765 320C765 300 785 295 795 315C805 290 825 300 828 320",
      "M95 720C90 650 130 600 160 590C180 560 215 550 232 580M130 705C125 650 150 625 165 620C180 600 210 600 232 605M0 925L40 920C55 900 50 850 20 740M0 590C20 600 15 650 0 680",
      "M1075 1120C1080 1050 1120 1005 1165 1003C1210 1010 1250 1060 1250 1120M1120 990L1128 960M1192 995L1185 960M1220 1010L1248 962M1085 1045L1030 1010L1070 1100M1250 1090L1305 1108L1275 1122M835 985L815 1100C815 1125 825 1140 835 1145M840 975C860 975 940 990 960 1010C965 1050 950 1100 945 1120M850 1040L930 1065M848 1078L905 1097M865 978L872 960M925 990L932 960M505 960C550 990 590 980 610 960"
    ],
    ellipses: [[173, 222, 37, 58], [142, 142, 15, 25], [184, 120, 15, 25], [223, 168, 15, 25], [338, 57, 27, 44], [338, 57, 47, 75], [462, 175, 25, 42], [462, 175, 46, 72]],
    small: [[532, 105], [377, 188], [608, 172], [472, 300], [33, 225], [25, 463], [1008, 1093], [1320, 1040], [1487, 950], [752, 1003], [232, 12]],
    medium: [[1062, 300], [68, 595], [0, 320], [101, 0]],
    large: [],
    stamps: [["sparkle", 612, 45, 5], ["cross", 708, 120, 10], ["bolt", 1410, 1035, 0], ["cloud", 1545, 1040, 0]]
  },
  {
    at: [0, 1609], scale: [0.3333, 0.3333],
    paths: [
      "M190 10C190 30 230 180 232 190M200 48L400 0M395 0L435 150C440 180 430 200 410 215L300 245M425 0L465 140C470 180 460 200 440 212M158 122H185C185 160 210 200 250 198C280 198 300 185 315 170C335 170 335 190 325 200C310 240 290 262 245 264C190 262 150 200 158 122M165 145C180 210 220 235 255 235C285 232 305 215 320 190",
      "M595 0C620 90 690 190 765 232C790 235 820 220 825 190C825 130 790 60 730 0M610 30L640 0M613 60L618 255C625 275 640 272 650 262L705 190M740 0L890 50C910 65 915 80 895 92L808 118M765 232L778 310C785 330 800 325 808 315L828 292M795 215L845 292C860 295 860 280 855 268L815 210M828 190L895 230C910 240 900 250 890 255L858 268",
      "M980 208C970 215 980 225 1050 245L1115 180L1075 262L1115 315C1125 325 1138 320 1138 305L1168 125C1170 105 1160 105 1145 112ZM65 310C60 290 70 275 115 270C125 280 135 268 155 267C165 270 170 280 185 320C180 335 170 340 100 370C85 370 75 350 65 330ZM240 312L258 335C265 360 245 365 270 405",
      "M228 508L318 405L455 492L235 518ZM225 505L217 432L290 422M235 712L475 682M297 555L380 547L390 640L308 653ZM248 582L297 575M385 570L425 562M262 645L305 640M390 630L430 622",
      "M500 745L707 462L782 575L888 387L962 530M625 582L675 558C680 600 680 615 690 617C710 610 715 560 725 545L770 560M815 525L865 505C865 540 860 560 872 563C890 560 895 510 903 493L945 508M500 747H1310M910 740C970 710 1000 695 1040 693C1100 695 1130 715 1150 720C1200 710 1250 705 1296 735",
      "M945 548L1080 465C1120 440 1140 440 1180 465L1310 550M925 570C920 590 935 610 965 603L1125 508L1270 600C1280 608 1290 608 1296 606M945 548C930 555 925 560 925 570M1007 582V695M1245 595V710M1082 582H1167V667H1082ZM1125 582V667M1082 625H1167M1017 440V495M1085 440V460M1020 382H1080C1105 385 1110 435 1080 437H1020C990 435 995 385 1020 382",
      "M1160 450C1200 360 1270 290 1350 268M1215 490L1238 438M1292 372C1320 352 1350 342 1385 335M1470 335L1500 342",
      "M207 890L232 775C240 765 250 768 275 772C290 785 280 800 270 805L275 825L262 835L265 855L255 870V900C290 910 300 950 290 970C280 1010 270 1040 230 1035C170 1025 135 1010 138 980C140 930 160 885 207 890M215 1003L125 1078M165 1010L107 1058",
      "M760 800C730 840 740 900 780 930C850 975 920 1010 950 1060C980 1130 930 1180 870 1162M855 1155C960 1230 1030 1180 1100 1120C1140 1080 1190 1050 1230 1055C1270 1050 1285 1030 1288 1010M1150 1090C1120 1120 1140 1145 1165 1143C1195 1140 1195 1110 1165 1095",
      "M500 1105C480 1020 520 940 620 930C700 915 760 945 775 1000L850 1155C840 1165 710 1100 705 1065C700 1030 735 1005 775 1000M500 1105C520 1160 560 1190 575 1205L620 1165C610 1150 600 1130 600 1115L500 1105M600 1115C560 1080 530 1060 515 1015M600 1115C600 1090 610 1075 620 1070C580 1050 555 1010 550 970M620 1070C605 1020 610 960 640 932M655 1060C640 1020 660 970 725 955M700 1065C680 1065 640 1040 620 1070M575 1205L592 1298C600 1300 610 1295 620 1290C650 1300 690 1270 695 1245L690 1200L620 1165M575 1205L625 1295M620 1170L695 1215",
      "M1020 980C1010 900 1050 850 1070 845M1140 835C1200 840 1230 890 1230 935L1020 980C1005 1000 1015 1035 1040 1035L1235 1000C1260 990 1255 940 1230 935M1065 850C1050 830 1060 810 1075 810L1075 790L1095 800L1105 780L1115 795C1125 775 1135 785 1130 800C1150 805 1145 820 1140 835L1125 850L1110 845L1100 865L1088 850Z",
      "M265 1240L318 1080C325 1065 335 1070 340 1080L435 1195C440 1205 440 1220 425 1220L485 1275C495 1290 490 1300 465 1300L520 1354M265 1240C270 1250 280 1245 285 1245L250 1320C240 1335 260 1340 275 1335L268 1354M305 1235C310 1260 335 1265 335 1240M360 1315C370 1340 385 1350 405 1345L400 1325C420 1335 440 1330 433 1315",
      "M0 1072C50 1040 110 1060 130 1110C130 1160 105 1200 100 1230C100 1280 90 1320 65 1354M130 1090C160 1120 155 1180 145 1220C140 1280 135 1320 118 1354M0 1260L30 1275M0 1300L20 1310M20 1160C25 1175 35 1178 52 1175M0 435L70 460C75 470 65 540 50 548L0 635M0 475H68M0 548H50",
      "M1275 1110C1310 1060 1380 1040 1430 1055C1470 1070 1490 1100 1490 1130C1450 1125 1420 1105 1408 1150L1415 1200L1450 1325L1385 1348L1350 1215C1340 1190 1340 1155 1310 1160L1285 1165M1232 1110C1245 1100 1255 1095 1262 1100L1282 1170C1280 1185 1260 1190 1255 1188ZM1345 1215L1415 1200M885 1354C880 1270 930 1225 990 1238C1040 1260 1110 1310 1195 1354M1050 1354C1060 1320 1105 1320 1110 1354"
    ],
    ellipses: [[218, 552, 33, 33], [230, 615, 33, 33], [237, 680, 33, 33], [448, 525, 33, 33], [456, 587, 33, 33], [465, 650, 33, 33], [207, 990, 17, 17], [115, 1068, 14, 14]],
    small: [[528, 110], [923, 156], [1264, 210], [961, 310], [364, 333], [766, 394], [563, 487], [104, 652], [953, 813], [943, 942], [1427, 973], [1052, 1089], [437, 1107], [219, 1140], [780, 1215], [1254, 1296], [5, 172], [1224, 15], [5, 742], [1495, 1216]],
    medium: [[1045, 38], [600, 362], [148, 468], [119, 786], [425, 826], [611, 841], [1134, 1220], [0, 355]],
    large: [[99, 70], [64, 932], [390, 987], [854, 865]],
    stamps: [["bolt", 493, 297, 0], ["sparkle", 1333, 860, 8]]
  },
  {
    at: [400, 1629], scale: [0.4911, 0.3333],
    paths: [
      "M745 145C750 130 760 130 767 140M840 170L868 185C870 200 855 200 845 195L832 180M690 235L678 265C680 285 690 285 695 270L700 238M850 112C862 115 860 130 845 132M1095 105L1113 135",
      "M915 288L912 225C915 205 925 205 1030 193C1045 195 1045 230 1050 285M1048 262L1180 235C1195 240 1190 260 1195 286M945 288C945 270 965 270 970 288M990 280C990 260 1010 260 1012 285M760 286C765 240 800 250 825 286",
      "M1250 288C1235 200 1270 130 1345 118C1410 120 1445 190 1445 288M1300 150L1330 130L1375 138L1378 160L1340 185L1310 170ZM1305 265L1335 243L1375 275M1268 190L1255 240L1262 288M1410 195H1435M1410 195L1408 250L1435 285",
      "M1375 120C1400 105 1430 95 1450 87C1440 110 1430 125 1428 155C1460 130 1500 125 1530 125C1500 150 1490 180 1500 200C1470 180 1455 220 1470 250C1480 270 1500 270 1518 250M1568 140L1535 205L1568 240",
      "M1225 0C1210 40 1240 75 1260 65C1280 50 1285 30 1295 10C1310 30 1330 35 1340 35C1340 90 1370 90 1372 35C1390 30 1395 15 1395 0M1495 0C1480 50 1500 70 1530 68L1545 55L1568 70",
      "M215 730C190 900 260 1100 420 1100C520 1095 590 1010 610 905M320 730C310 830 350 940 425 938C460 935 480 920 485 905M270 830C270 870 280 900 290 925M330 985C350 1010 365 1020 388 1018M438 1008C460 1000 475 990 490 975M268 750V730M372 835C390 760 430 735 470 735C500 738 520 755 530 770M372 835H475M435 903C460 820 510 765 570 762C640 770 680 830 710 903ZM555 762V730M600 762V730M530 937L550 905M735 730C720 780 740 850 765 850",
      "M765 975C660 1050 590 1160 570 1296M625 1296L620 1175L655 1200L678 1130L717 1168L675 1265L655 1245L635 1296M230 1290L370 1150C380 1145 385 1150 390 1160L260 1296M390 1160L412 1190L340 1245L290 1296M340 1245L375 1296M412 1190L435 1296",
      "M918 1188L935 1296M960 1232L1048 1208M1060 1296C1050 1230 1070 1195 1090 1188M1130 1222L1225 1195L1230 1296M1250 1212C1300 1215 1330 1250 1315 1296M1380 1188L1400 1260C1405 1280 1400 1290 1395 1296M1500 1296C1490 1240 1510 1200 1530 1188M1568 1150C1530 1180 1530 1240 1568 1296M840 1215L850 1190M1550 1220L1568 1200",
      "M1568 350L1520 345M1568 400L1520 375M1568 610L1520 600M1545 760L1568 750M1545 760L1568 870M385 290L400 236M515 290L512 236M600 236L615 250M440 260L470 240L500 260"
    ],
    ellipses: [[706, 175, 40, 62], [804, 135, 40, 60], [1075, 72, 28, 42]],
    small: [[299, 44], [977, 110], [1200, 138], [870, 263], [1546, 682], [648, 968], [780, 1290], [1442, 1190]],
    medium: [[516, 1183], [280, 1140], [1560, 990]],
    large: [],
    stamps: []
  },
  {
    at: [0, 0], scale: [1, 1],
    paths: [
      "M970 1449C960 1480 990 1510 1030 1505C1060 1500 1075 1470 1078 1449M1078 1455C1110 1460 1100 1490 1065 1485M1000 1470C1005 1490 1030 1490 1040 1475",
      "M884 1594C878 1570 896 1562 906 1564C912 1548 942 1548 946 1566C962 1572 962 1590 954 1594ZM908 1578v3M930 1578v3",
      "M1040 1536L1050 1556M1096 1536L1086 1556M1014 1572L1040 1576M1122 1572L1097 1576M1040 1624L1052 1606M1096 1624L1084 1606",
      "M830 1470L850 1500L838 1530M1140 1500C1120 1520 1130 1550 1160 1552M850 1540L880 1520"
    ],
    ellipses: [[1068, 1580, 56, 56], [1068, 1580, 30, 30]],
    small: [[870, 1480], [920, 1500], [1000, 1545], [1130, 1640], [840, 1610], [1150, 1470]],
    medium: [[900, 1530], [980, 1610], [1150, 1590]],
    large: [],
    stamps: []
  }
];

// lettering inside the doodles: x, y, size, angle, text
const LETTERS = [
  [100, 652, 62, -12, "24"],
  [781, 331, 38, 4, "1:13"],
  [220, 117, 20, 12, "42"],
  [622, 330, 62, -4, "文A"],
  [890, 1018, 42, -20, "1"]
];

class ChatPattern extends HTMLElement {
  constructor() {
    super();
    this.shadowDOM = this.attachShadow({mode: "open"});
  }

  connectedCallback() {
    this.render();
  }

  tile(tile) {
    const [ox, oy] = tile.at;
    const [sx, sy] = tile.scale;
    const place = (x, y) => [Math.round(ox + x * sx), Math.round(oy + y * sy)];
    const dots = (list, r) => list.map(([x, y]) => {
      const [cx, cy] = place(x, y);
      return `<circle cx="${cx}" cy="${cy}" r="${r}"/>`;
    }).join("");
    const stamps = tile.stamps.map(([name, x, y, angle]) =>
      `<path transform="translate(${place(x, y)}) rotate(${angle})" d="${STAMPS[name]}"/>`).join("");
    return `
      <g transform="translate(${ox} ${oy}) scale(${sx} ${sy})">
        ${tile.paths.map(d => `<path d="${d}"/>`).join("")}
        ${tile.ellipses.map(([cx, cy, rx, ry]) => `<ellipse cx="${cx}" cy="${cy}" rx="${rx}" ry="${ry}"/>`).join("")}
      </g>
      ${dots(tile.small, 6)}${dots(tile.medium, 11)}${dots(tile.large, 15)}${stamps}`;
  }

  render() {
    this.shadowDOM.innerHTML = `
    <style>
    :host {
      display: block;
      overflow: hidden;
    }

    svg {
      display: block;
      width: 100%;
      height: 100%;
      fill: none;
      stroke: #172027;
      stroke-width: 4;
      stroke-linecap: round;
      stroke-linejoin: round;
    }

    path, ellipse {
      vector-effect: non-scaling-stroke;
    }

    text {
      font-family: "DejaVu Sans", "Noto Sans CJK SC", sans-serif;
      stroke-width: 3;
    }
    </style>
    <svg viewBox="0 0 1170 2061" preserveAspectRatio="xMidYMin slice" aria-hidden="true">
      ${TILES.map(tile => this.tile(tile)).join("")}
      ${LETTERS.map(([x, y, size, angle, text]) =>
        `<text transform="translate(${x} ${y}) rotate(${angle})" font-size="${size}">${text}</text>`).join("")}
    </svg>
    `;
  }
}

customElements.define("chat-pattern", ChatPattern);


class MockHeader extends HTMLElement {
  constructor() {
    super();
    this.shadowDOM = this.attachShadow({mode: "open"});
    this.shadowDOM.innerHTML = `
    <style>
    :host {
      display: block;
      border-bottom: 3px solid #252c34;
    }

    header {
      display: flex;
      align-items: center;
      gap: 24px;
      padding: 30px 36px;
    }

    .logo {
      display: flex;
      width: 84px;
      height: 84px;
      border-radius: 30px;
      background: linear-gradient(135deg, #25d366, #20844a);
    }

    h1 {
      flex: 1;
      margin: 0;
      color: #ffffff;
      font-size: 53px;
      font-weight: 600;
      line-height: 60px;
    }

    button {
      display: flex;
      align-items: center;
      justify-content: center;
      height: 108px;
      padding: 0;
      border: 0;
      border-radius: 42px;
      background: none;
      font-family: inherit;
    }

    .icon {
      width: 108px;
    }

    .export {
      gap: 24px;
      padding: 0 36px;
      background-color: #29d367;
      color: #ffffff;
      font-size: 48px;
      font-weight: 700;
    }
    </style>
    <header>
      <div class="logo">
        <svg width="84" height="84" viewBox="0 0 84 84" aria-hidden="true">
          <path fill="#fff" fill-rule="evenodd" d="M31 26L34 22Q35 21 36 21H49Q50 21 51 22L54 26H64Q66 26 66 28V61Q66 63 64 63H20Q18 63 18 61V28Q18 26 20 26ZM32 54L33.500 49.500A10.500 10.500 0 1 1 38 53Z"/>
        </svg>
      </div>
      <h1>MockShot</h1>
      <button class="icon" type="button" aria-label="Generate">
        <svg width="108" height="108" viewBox="0 0 108 108" fill="#25d366" aria-hidden="true">
          <path fill-rule="evenodd" d="M39 33L45 48L58 54L45 60L39 75L33 60L20 54L33 48ZM39 45L36 51L31 54L36 57L39 63L42 57L47 54L42 51Z"/>
          <path d="M62 27L65 34L71 37L65 40L62 46L59 40L53 37L59 34ZM64 57L68 65L76 69L68 73L64 81L60 73L52 69L60 65Z"/>
        </svg>
      </button>
      <button class="icon" type="button" aria-label="Settings">
        <svg width="108" height="108" viewBox="-54 -54 108 108" fill="none" stroke="#b6b9bb" stroke-width="5" stroke-linejoin="round" aria-hidden="true">
          <path d="M-4.500-22.500H4.500Q7-12.100 17.200-15.100L21.700-7.400Q14 0 21.700 7.400L17.200 15.100Q7 12.100 4.500 22.500H-4.500Q-7 12.100-17.200 15.100L-21.700 7.400Q-14 0-21.700-7.400L-17.200-15.100Q-7-12.100-4.500-22.500Z"/>
          <circle r="5"/>
        </svg>
      </button>
      <button class="export" type="button">
        <svg width="36" height="36" viewBox="0 0 36 36" aria-hidden="true">
          <path fill="none" stroke="#fff" stroke-width="5" stroke-linejoin="round" d="M2 17V32H34V17"/>
          <path fill="#fff" d="M15 2H21V14H30L18 26L6 14H15Z"/>
        </svg>
        <span>Export</span>
      </button>
    </header>
    `;
  }
}

customElements.define("mock-header", MockHeader);


class ChatTime extends HTMLElement {
  constructor() {
    super();
    this.shadowDOM = this.attachShadow({mode: "open"});
    this.shadowDOM.innerHTML = `
    <style>
    :host {
      display: block;
      align-self: center;
      margin: 54px 0 18px;
      padding: 0 36px;
      border-radius: 24px;
      background-color: #182329;
      color: #8696a0;
      font-size: 36px;
      line-height: 54px;
      -webkit-text-stroke: 1px #8696a0;
    }
    </style>
    <slot></slot>
    `;
  }
}

customElements.define("chat-time", ChatTime);


class ChatMessage extends HTMLElement {
  constructor() {
    super();
    this.shadowDOM = this.attachShadow({mode: "open"});
  }

  connectedCallback() {
    this.render();
  }

  render() {
    const avatar = this.getAttribute("avatar");
    const sent = this.hasAttribute("sent");

    this.shadowDOM.innerHTML = `
    <style>
    :host {
      display: flex;
      align-items: flex-end;
      gap: 18px;
    }

    :host([sent]) {
      justify-content: flex-end;
    }

    .avatar {
      flex: none;
      width: 84px;
      border-radius: 50%;
      background-color: #79b234;
      color: #ffffff;
      font-family: Inter, sans-serif;
      font-size: 28px;
      font-weight: 500;
      line-height: 84px;
      text-align: center;
    }

    .bubble {
      box-sizing: border-box;
      max-width: 688px;
      padding: 18px 30px 12px;
      border-radius: 24px 24px 24px 0;
      background-color: #222c32;
      color: #e9edef;
    }

    :host([sent]) .bubble {
      max-width: 724px;
      border-radius: 24px 24px 0 24px;
      background-color: #025c4b;
    }

    :host([joined]) .bubble {
      border-radius: 24px;
    }

    p {
      margin: 0 0 6px;
      font-size: 48px;
      line-height: 67px;
    }

    .meta {
      display: flex;
      align-items: center;
      justify-content: flex-end;
      gap: 9px;
      color: #8696a0;
      font-size: 33px;
      line-height: 42px;
    }
    </style>
    ${avatar ? `<div class="avatar">${avatar}</div>` : ""}
    <div class="bubble">
      <p><slot></slot></p>
      <div class="meta">
        <time>${this.getAttribute("time")}</time>
        ${sent ? `
        <svg width="48" height="44" viewBox="0 0 48 44" fill="none" stroke="#8b989f" stroke-width="5" aria-hidden="true">
          <path d="M2 22L12 33L27 12M18 22L29 33L46 12"/>
        </svg>` : ""}
      </div>
    </div>
    `;
  }
}

customElements.define("chat-message", ChatMessage);


class ChatLog extends HTMLElement {
  constructor() {
    super();
    this.shadowDOM = this.attachShadow({mode: "open"});
    this.shadowDOM.innerHTML = `
    <style>
    :host {
      position: relative;
      display: flex;
      flex-direction: column;
      overflow: hidden;
    }

    chat-pattern {
      position: absolute;
      inset: 0;
    }

    .messages {
      position: relative;
      display: flex;
      flex: 1;
      flex-direction: column;
      justify-content: flex-end;
      padding: 0 24px 36px;
      font-family: "Liberation Sans", Arial, sans-serif;
      font-kerning: none;
    }
    </style>
    <chat-pattern></chat-pattern>
    <div class="messages"><slot></slot></div>
    `;
  }
}

customElements.define("chat-log", ChatLog);


class ComposeBar extends HTMLElement {
  constructor() {
    super();
    this.shadowDOM = this.attachShadow({mode: "open"});
    this.shadowDOM.innerHTML = `
    <style>
    :host {
      display: flex;
      flex-direction: column;
      gap: 24px;
      padding: 30px 36px 35px;
    }

    .row {
      display: flex;
      gap: 18px;
    }

    .compose {
      display: flex;
      align-items: flex-end;
      gap: 24px;
    }

    button {
      box-sizing: border-box;
      display: flex;
      align-items: center;
      gap: 28px;
      height: 78px;
      padding: 0 36px;
      border: 3px solid #6e7275;
      border-radius: 30px;
      background: none;
      color: #dbdddf;
      font-family: inherit;
      font-size: 38px;
      font-weight: 600;
    }

    button[aria-pressed="true"] {
      border-color: #25d366;
      background-color: #153a2a;
      color: #25d366;
    }

    .clear {
      margin-left: auto;
      border-color: #6f2229;
      color: #ff6167;
    }

    input {
      box-sizing: border-box;
      flex: 1;
      min-width: 0;
      height: 132px;
      padding: 0 36px;
      border: 3px solid #74797b;
      border-radius: 42px;
      background-color: #252c2f;
      color: #ffffff;
      font-family: inherit;
      font-size: 43px;
    }

    input::placeholder {
      color: #7d8184;
      opacity: 1;
    }

    .send {
      justify-content: center;
      width: 108px;
      height: 108px;
      padding: 0;
      border: 0;
      border-radius: 42px;
      background-color: #242b32;
    }
    </style>
    <div class="row">
      <button type="button" aria-pressed="true">Received</button>
      <button type="button" aria-pressed="false">Sent</button>
      <button class="clear" type="button">
        <svg width="32" height="32" viewBox="0 0 32 32" fill="none" stroke="#ff6167" stroke-width="4" aria-hidden="true">
          <path d="M0 8H31M9 8V2H22V8M5 8V30H26V8"/>
          <path d="M13 14V25M18 14V25"/>
        </svg>
        <span>Clear</span>
      </button>
    </div>
    <div class="compose">
      <input type="text" placeholder="Type a message..." aria-label="Message">
      <button class="send" type="button" aria-label="Send">
        <svg width="108" height="108" viewBox="0 0 108 108" fill="none" stroke="#5f6468" stroke-width="4" aria-hidden="true">
          <path d="M54 71V42M40 55L54 41L68 55"/>
        </svg>
      </button>
    </div>
    `;
  }
}

customElements.define("compose-bar", ComposeBar);


class MockApp extends HTMLElement {
  constructor() {
    super();
    this.shadowDOM = this.attachShadow({mode: "open"});
    this.shadowDOM.innerHTML = `
    <style>
    :host {
      display: flex;
      flex-direction: column;
      min-height: 100vh;
    }

    chat-log {
      flex: 1;
    }

    .follow {
      margin-top: 6px;
    }
    </style>
    <mock-header></mock-header>
    <chat-log>
      <chat-time>Tue 2:00 AM</chat-time>
      <chat-message avatar="A" time="2:00 AM">Hey! Are you free tonight?</chat-message>
      <chat-time>Tue 2:01 AM</chat-time>
      <chat-message sent time="2:01 AM">Yeah, what did you have in mind?</chat-message>
      <chat-time>Tue 2:02 AM</chat-time>
      <chat-message avatar="A" time="2:02 AM">Was thinking we could grab dinner 🍜</chat-message>
      <chat-time>Tue 2:06 AM</chat-time>
      <chat-message sent joined time="2:06 AM">That sounds amazing honestly</chat-message>
      <chat-message class="follow" sent time="2:07 AM">Let's do 7pm?</chat-message>
    </chat-log>
    <compose-bar></compose-bar>
    `;
  }
}

customElements.define("mock-app", MockApp);
</script>
</body>
</html>
